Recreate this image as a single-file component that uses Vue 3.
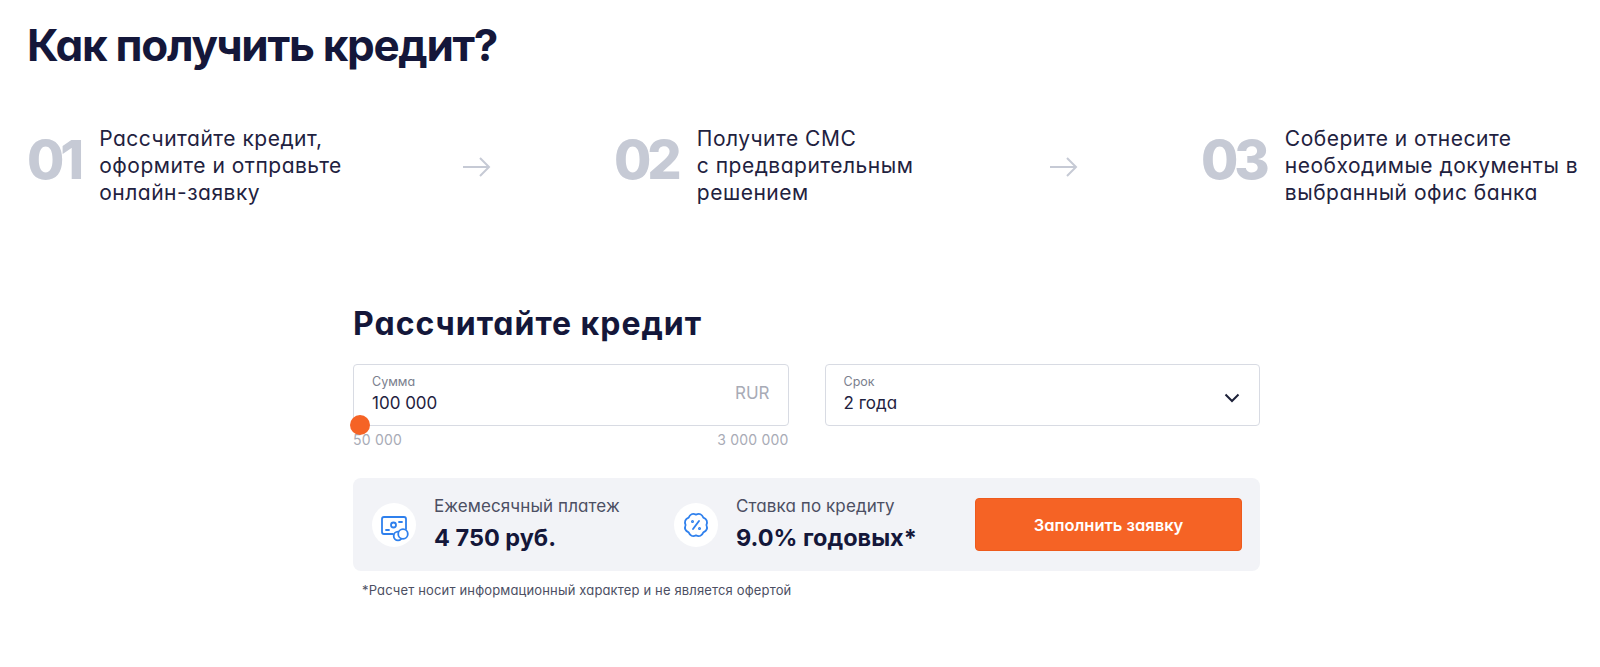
<script setup>
const steps = [
  { n: '01', lines: ['Рассчитайте кредит,', 'оформите и отправьте', 'онлайн-заявку'] },
  { n: '02', lines: ['Получите СМС', 'с предварительным', 'решением'] },
  { n: '03', lines: ['Соберите и отнесите', 'необходимые документы в', 'выбранный офис банка'] },
]

// Scalloped 8-lobed badge outline
function badge(cx, cy, r, depth, lobes) {
  let d = ''
  const pt = (a, rad) => `${(cx + Math.cos(a) * rad).toFixed(2)} ${(cy + Math.sin(a) * rad).toFixed(2)}`
  const step = (Math.PI * 2) / lobes
  for (let i = 0; i < lobes; i++) {
    const a = i * step - Math.PI / 2
    if (i === 0) d += `M${pt(a, r - depth)}`
    d += `Q${pt(a + step / 2, r + depth)} ${pt(a + step, r - depth)}`
  }
  return d + 'Z'
}
const badgePath = badge(22, 22, 12, 1.6, 8)
</script>

<template>
  <div class="page">
    <h1 class="title">Как получить кредит?</h1>
    <div class="steps">
      <div v-for="(s, i) in steps" :key="s.n" class="cell">
        <div class="step">
          <div class="num">{{ s.n }}</div>
          <div class="txt"><div v-for="l in s.lines" :key="l">{{ l }}</div></div>
        </div>
        <svg v-if="i < 2" class="arrow" width="29" height="22" viewBox="0 0 29 22" fill="none" stroke="#c6cad5" stroke-width="2"><path d="M1 11h26M18 2l9 9-9 9"/></svg>
      </div>
    </div>
    <div class="calc">
      <h2 class="sub">Рассчитайте кредит</h2>
      <div class="fields">
        <div class="col">
          <div class="field">
            <div class="lab">Сумма</div>
            <div class="val">100 000</div>
            <div class="cur">RUR</div>
            <div class="knob"></div>
          </div>
          <div class="range"><span>50 000</span><span>3 000 000</span></div>
        </div>
        <div class="col">
          <div class="field">
            <div class="lab">Срок</div>
            <div class="val">2 года</div>
            <svg class="chev" width="16" height="10" viewBox="0 0 16 10" fill="none" stroke="#1d2139" stroke-width="2"><path d="M1.500 1.500 8 8l6.500-6.500"/></svg>
          </div>
        </div>
      </div>
      <div class="panel">
        <div class="info first">
          <div class="ic">
            <svg width="44" height="44" viewBox="0 0 44 44" fill="none" stroke="#2f80ed" stroke-width="1.800" stroke-linecap="round">
              <path d="M21 31H12a2 2 0 0 1-2-2V16a2 2 0 0 1 2-2h20a2 2 0 0 1 2 2v10"/>
              <circle cx="21.500" cy="22" r="2.500"/>
              <path d="M14 27h3M27 19h3"/>
              <circle cx="26" cy="33" r="4.300"/>
              <circle cx="31" cy="31" r="4.800" fill="#fff"/>
            </svg>
          </div>
          <div><div class="il">Ежемесячный платеж</div><div class="iv">4 750 руб.</div></div>
        </div>
        <div class="info second">
          <div class="ic">
            <svg width="44" height="44" viewBox="0 0 44 44" fill="none" stroke="#2f80ed" stroke-width="1.800" stroke-linecap="round" stroke-linejoin="round">
              <path :d="badgePath"/>
              <path d="M25 18l-6 8"/>
              <circle cx="18.500" cy="18.500" r=".6"/>
              <circle cx="25.500" cy="25.500" r=".6"/>
            </svg>
          </div>
          <div><div class="il">Ставка по кредиту</div><div class="iv">9.0% годовых*</div></div>
        </div>
        <button class="btn">Заполнить заявку</button>
      </div>
      <div class="note">*Расчет носит информационный характер и не является офертой</div>
    </div>
  </div>
</template>

<style>
html, body { margin: 0; background: #fff; }
</style>

<style scoped>
.page { width: 1600px; height: 667px; overflow: hidden; font-family: "Inter", "Noto Sans", sans-serif; font-feature-settings: "cv11" 1; color: #1d2139; }
.title { margin: 0; padding: 17px 0 0 27px; font-size: 44px; line-height: 56px; font-weight: 700; letter-spacing: -1.300px; color: #14173a; }
.steps { display: grid; grid-template-columns: 587px 587px 1fr; margin: 52px 0 0 27px; }
.cell { display: grid; grid-template-columns: 435px 30px; align-items: center; }
.step { display: flex; align-items: center; gap: 19px; }
.num { font-size: 54px; font-weight: 800; letter-spacing: -4px; color: #c6cad5; line-height: 1; margin-bottom: 12px; }
.txt { font-size: 21px; line-height: 27px; letter-spacing: .500px; color: #1f2240; white-space: nowrap; }
.arrow { margin-top: 2px; }
.calc { width: 907px; margin: 98px 0 0 353px; }
.sub { margin: 0; font-size: 32px; line-height: 40px; font-weight: 700; letter-spacing: 1px; color: #14173a; }
.fields { display: flex; gap: 36px; margin-top: 20px; }
.col { width: 436px; }
.field { position: relative; height: 62px; border: 1px solid #d8dbe3; border-radius: 4px; box-sizing: border-box; padding: 10px 18px; }
.lab { font-size: 12.500px; line-height: 14px; color: #7b7f8e; }
.val { font-size: 17px; line-height: 22px; margin-top: 3px; color: #1f2240; }
.cur { position: absolute; right: 18px; top: 18px; font-size: 17px; color: #a8abb6; }
.chev { position: absolute; right: 19px; top: 28px; }
.knob { position: absolute; left: -4px; top: 50px; width: 20px; height: 20px; border-radius: 50%; background: #f56325; }
.range { display: flex; justify-content: space-between; font-size: 14px; line-height: 16px; letter-spacing: .200px; color: #a8abb6; margin-top: 6px; }
.panel { display: flex; align-items: center; height: 93px; margin-top: 30px; background: #f2f3f7; border-radius: 8px; padding: 0 18px 0 19px; box-sizing: border-box; }
.info { display: flex; align-items: center; gap: 18px; }
.first { width: 302px; }
.second { width: 300px; }
.ic { width: 44px; height: 44px; border-radius: 50%; background: #fff; flex: none; }
.ic svg { display: block; }
.il { font-size: 17px; line-height: 22px; letter-spacing: .100px; color: #4c4f63; }
.iv { font-size: 23.500px; line-height: 32px; margin-top: 5px; font-weight: 700; color: #14173a; }
.btn { width: 267px; height: 53px; margin-left: auto; border: 1px solid #ee5a1c; border-radius: 4px; background: #f56325; color: #fff; font: 600 16.500px "Inter", sans-serif; font-feature-settings: "cv11" 1; }
.note { font-size: 13px; line-height: 16px; letter-spacing: .150px; color: #4c4f63; margin: 11px 0 0 9px; }
</style>
